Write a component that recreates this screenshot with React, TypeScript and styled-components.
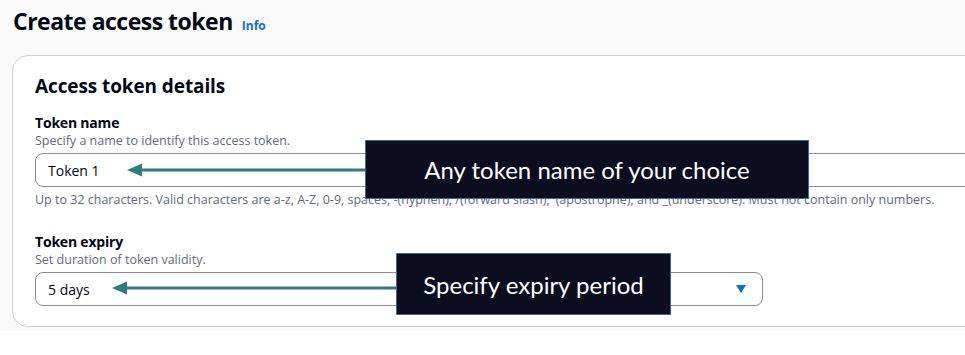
import React from "react";
import styled, { createGlobalStyle } from "styled-components";

const GlobalStyle = createGlobalStyle`
  html, body {
    margin: 0;
    padding: 0;
    background: #ffffff;
    overflow: hidden;
  }
  body {
    font-family: "Open Sans", "Noto Sans", "Liberation Sans", sans-serif;
    color: #000716;
  }
`;

const Page = styled.div`
  position: relative;
  width: 965px;
  height: 355px;
  overflow: hidden;
  background: linear-gradient(#fafafa 0, #fafafa 331px, #ffffff 331px);
`;

const Header = styled.div`
  display: flex;
  align-items: baseline;
  gap: 9px;
  padding: 5px 0 0 13px;
  height: 55px;
  box-sizing: border-box;
`;

const Title = styled.h1`
  margin: 0;
  font-size: 23px;
  line-height: 32px;
  font-weight: 700;
  letter-spacing: -0.5px;
`;

const InfoLink = styled.a`
  font-size: 12px;
  font-weight: 700;
  color: #0972d3;
  text-decoration: none;
`;

const Card = styled.section`
  margin-left: 12px;
  width: 1000px;
  background: #ffffff;
  border: 1px solid #cfcfd4;
  border-radius: 16px;
  padding: 17px 22px 20px 22px;
  box-sizing: border-box;
`;

const CardTitle = styled.h2`
  margin: 0 0 15px 0;
  font-size: 19px;
  line-height: 26px;
  font-weight: 700;
  letter-spacing: -0.1px;
`;

const Field = styled.div<{ $gap?: number }>`
  display: flex;
  flex-direction: column;
  margin-bottom: ${(p) => p.$gap ?? 0}px;
`;

const Label = styled.label`
  font-size: 14px;
  line-height: 18px;
  font-weight: 700;
  letter-spacing: -0.2px;
`;

const Description = styled.div`
  font-size: 12.5px;
  line-height: 17px;
  color: #5f6b7a;
  margin-bottom: 4px;
`;

const Control = styled.div<{ $width?: string }>`
  display: flex;
  align-items: center;
  justify-content: space-between;
  width: ${(p) => p.$width ?? "100%"};
  height: 34px;
  box-sizing: border-box;
  border: 1px solid #8c8c94;
  border-radius: 8px;
  padding: 0 16px 0 12px;
  font-size: 14px;
  color: #000716;
  background: #ffffff;
`;

const Caret = styled.svg`
  width: 10px;
  height: 8px;
  display: block;
`;

const Constraint = styled.div`
  margin-top: 5px;
  font-size: 12.5px;
  line-height: 16px;
  color: #5f6b7a;
  white-space: nowrap;
`;

const Callout = styled.div<{ $x: number; $y: number; $w: number; $h: number }>`
  position: absolute;
  left: ${(p) => p.$x}px;
  top: ${(p) => p.$y}px;
  width: ${(p) => p.$w}px;
  height: ${(p) => p.$h}px;
  box-sizing: border-box;
  display: flex;
  align-items: center;
  justify-content: center;
  background: #0c0d1f;
  border: 1px solid #3f6a96;
  color: #ffffff;
  font-family: Lato, "Open Sans", sans-serif;
  font-size: 24px;
  white-space: nowrap;
`;

const Arrow = styled.svg<{ $x: number; $y: number; $w: number }>`
  position: absolute;
  left: ${(p) => p.$x}px;
  top: ${(p) => p.$y - 8}px;
  width: ${(p) => p.$w}px;
  height: 16px;
  overflow: visible;
`;

function Pointer({ x, y, w }: { x: number; y: number; w: number }) {
  return (
    <Arrow $x={x} $y={y} $w={w} viewBox={`0 0 ${w} 16`}>
      <line x1={13} y1={8} x2={w} y2={8} stroke="#347b7e" strokeWidth={3} />
      <polygon points={`0,8 15,1.5 15,14.5`} fill="#347b7e" />
    </Arrow>
  );
}

export default function App() {
  return (
    <>
      <GlobalStyle />
      <Page>
        <Header>
          <Title>Create access token</Title>
          <InfoLink href="#">Info</InfoLink>
        </Header>
        <Card>
          <CardTitle>Access token details</CardTitle>
          <Field $gap={25}>
            <Label>Token name</Label>
            <Description>Specify a name to identify this access token.</Description>
            <Control>Token 1</Control>
            <Constraint>
              Up to 32 characters. Valid characters are a-z, A-Z, 0-9, spaces, -(hyphen), /(forward slash), '(apostrophe), and _(underscore). Must not contain only numbers.
            </Constraint>
          </Field>
          <Field>
            <Label>Token expiry</Label>
            <Description>Set duration of token validity.</Description>
            <Control $width="728px">
              <span>5 days</span>
              <Caret viewBox="0 0 10 8">
                <polygon points="0,0 10,0 5,8" fill="#0972d3" />
              </Caret>
            </Control>
          </Field>
        </Card>
        <Pointer x={127} y={170} w={240} />
        <Callout $x={365} $y={140} $w={444} $h={59}>Any token name of your choice</Callout>
        <Pointer x={112} y={288} w={286} />
        <Callout $x={396} $y={253} $w={275} $h={62}>Specify expiry period</Callout>
      </Page>
    </>
  );
}
